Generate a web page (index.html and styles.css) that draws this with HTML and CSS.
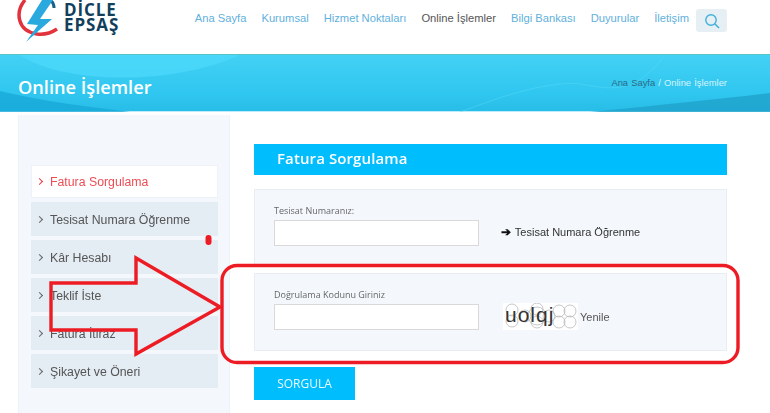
FILE: index.html
```html
<!DOCTYPE html>
<html lang="tr">
<head>
<meta charset="utf-8">
<title>Online İşlemler</title>
<link rel="stylesheet" href="styles.css">
</head>
<body>
<div class="page">
  <header class="header">
    <a class="logo">
      <svg class="logo-mark" width="60" height="44" viewBox="0 0 60 44">
        <path d="M25 0C15 12 17 31 37 34C45 35 51 33 57 29" fill="none" stroke="#e2333d" stroke-width="3.500"/>
        <path d="M50 0C53 2 54 5 54 8" fill="none" stroke="#1a5f86" stroke-width="3"/>
        <polygon points="42,0 53,0 40,19 52,19 26,42 38,25 27,24" fill="#2aa9df"/>
      </svg>
      <span class="logo-text">DİCLE<br>EPSAŞ</span>
    </a>
    <nav class="nav">
      <a>Ana Sayfa</a><a>Kurumsal</a><a>Hizmet Noktaları</a><a class="current">Online İşlemler</a><a>Bilgi Bankası</a><a>Duyurular</a><a>İletişim</a>
      <span class="search">
        <svg width="16" height="16" viewBox="0 0 16 16"><circle cx="7" cy="7" r="5.200" fill="none" stroke="#3fb0dc" stroke-width="1.400"/><path d="M11 11l4 4" stroke="#3fb0dc" stroke-width="1.600"/></svg>
      </span>
    </nav>
  </header>
  <section class="banner">
    <svg class="banner-art" width="770" height="57" viewBox="0 0 770 57" preserveAspectRatio="none">
      <path d="M20 0C60 28 170 32 240 0Z" fill="#4cd8fb" opacity=".75"/>
      <path d="M0 36C40 46 90 52 130 57H0Z" fill="#15a5d6" opacity=".7"/>
      <path d="M590 57C660 50 720 44 770 38V57Z" fill="#1fa3cc" opacity=".8"/>
      <path d="M460 57C500 42 530 32 560 29C590 26 600 38 630 30C640 26 650 18 663 3" fill="none" stroke="#5adcf8" stroke-width="1" opacity=".45"/>
    </svg>
    <h1 class="banner-title">Online İşlemler</h1>
    <div class="crumbs"><span class="crumb-home">Ana Sayfa</span> / Online İşlemler</div>
  </section>
  <main class="main">
    <aside class="sidebar">
      <ul class="menu">
        <li class="active"><i></i>Fatura Sorgulama</li>
        <li><i></i>Tesisat Numara Öğrenme</li>
        <li><i></i>Kâr Hesabı</li>
        <li><i></i>Teklif İste</li>
        <li><i></i>Fatura İtiraz</li>
        <li><i></i>Şikayet ve Öneri</li>
      </ul>
    </aside>
    <div class="content">
      <h2 class="title">Fatura Sorgulama</h2>
      <div class="box box-first">
        <div class="field">
          <label>Tesisat Numaranız:</label>
          <div class="input"></div>
        </div>
        <a class="learn"><b>➔</b> Tesisat Numara Öğrenme</a>
      </div>
      <div class="box box-second">
        <div class="field">
          <label>Doğrulama Kodunu Giriniz</label>
          <div class="input"></div>
        </div>
        <div class="captcha">
          <svg width="75" height="27" viewBox="0 0 75 27">
            <rect width="75" height="27" fill="#fff"/>
            <g fill="none" stroke="#b9b9b9" stroke-width=".8">
              <circle cx="9" cy="7" r="6"/><circle cx="9" cy="18" r="6"/><circle cx="22" cy="13" r="6"/><circle cx="34" cy="6" r="6"/><circle cx="34" cy="13" r="9"/><circle cx="34" cy="19" r="6"/><circle cx="46" cy="13" r="6"/><circle cx="56" cy="8" r="6"/><circle cx="56" cy="19" r="6"/><circle cx="67" cy="8" r="6"/><circle cx="67" cy="19" r="6"/>
            </g>
            <text x="2" y="19" class="captcha-text">uolqj</text>
          </svg>
          <span class="renew">Yenile</span>
        </div>
      </div>
      <button class="submit" type="button">SORGULA</button>
    </div>
  </main>
  <svg class="annotation" width="770" height="413" viewBox="0 0 770 413">
    <rect x="222" y="265.500" width="516" height="97" rx="15" fill="none" stroke="#ed1c24" stroke-width="3.400"/>
    <polygon points="51,283 136,283 136,258 220,307 136,354 136,330 51,330" fill="none" stroke="#ed1c24" stroke-width="3.400"/>
    <rect x="205.500" y="235" width="6" height="10" rx="3" fill="#ed1c24"/>
  </svg>
</div>
</body>
</html>
```
FILE: styles.css
```css
* { box-sizing: border-box; }
html, body { margin: 0; padding: 0; background: #fff; }
.page {
  position: relative;
  width: 770px;
  height: 413px;
  overflow: hidden;
  font-family: "Liberation Sans", Arial, sans-serif;
  filter: blur(.45px);
}
.header {
  height: 54px;
  display: flex;
  justify-content: space-between;
  align-items: flex-start;
  padding-right: 43px;
  background: #fff;
}
.logo { display: flex; }
.logo-mark { flex: none; }
.logo-text {
  margin: 2px 0 0 4px;
  font-family: "Open Sans", sans-serif;
  font-weight: 700;
  font-size: 17px;
  line-height: 15px;
  letter-spacing: .9px;
  color: #123f5c;
}
.nav { display: flex; align-items: flex-start; padding-top: 9px; }
.nav a {
  margin-right: 15px;
  font-size: 11.200px;
  line-height: 18px;
  color: #5fb0dd;
  white-space: nowrap;
}
.nav a:nth-child(7) { margin-right: 7px; }
.nav a.current { color: #555; }
.search {
  width: 31px;
  height: 23px;
  display: flex;
  align-items: center;
  justify-content: center;
  background: #e6eff3;
  border-radius: 3px;
}
.banner {
  position: relative;
  height: 58px;
  display: flex;
  justify-content: space-between;
  align-items: center;
  padding: 0 43px 2px 18px;
  background: linear-gradient(#43d1f5, #2fc6ef 70%, #28bde8);
  border-top: 1px solid #57c3c4;
  border-bottom: 1px solid #bcecf9;
}
.banner-art { position: absolute; left: 0; top: 0; }
.banner-title {
  position: relative;
  margin: 0;
  font-family: "Open Sans", sans-serif;
  font-size: 18.200px;
  font-weight: 600;
  color: #fff;
  padding-top: 10px;
}
.crumbs {
  position: relative;
  align-self: center;
  font-size: 9.400px;
  word-spacing: .5px;
  color: #d6f3fc;
}
.crumb-home { color: #2a6c86; }
.main { display: flex; padding-left: 18px; }
.sidebar {
  flex: none;
  width: 212px;
  height: 310px;
  margin-top: 3px;
  padding: 50px 11px 0 12px;
  background: #f4f8fd;
  border-left: 1px solid #edf3fa;
  border-right: 1px solid #edf3fa;
}
.menu { list-style: none; margin: 0; padding: 0; display: flex; flex-direction: column; gap: 4px; }
.menu li {
  height: 34px;
  display: flex;
  align-items: center;
  padding: 1px 0 0 6px;
  background: #e4ecf4;
  font-size: 12.300px;
  color: #555;
  white-space: nowrap;
}
.menu li i {
  width: 5px;
  height: 5px;
  margin-right: 8px;
  border-top: 1px solid #666;
  border-right: 1px solid #666;
  transform: rotate(45deg);
}
.menu li.active {
  height: 33px;
  padding: 0 0 0 5px;
  background: #fff;
  border: 1px solid #eef2f8;
  color: #ec4d55;
}
.menu li.active i { border-color: #ec3b45; }
.content { flex: none; width: 473px; margin-left: 24px; padding-top: 32px; }
.title {
  height: 31px;
  margin: 0 0 14px;
  padding-left: 23px;
  background: #00bdfe;
  color: #fff;
  font-family: "Open Sans", sans-serif;
  font-size: 15px;
  font-weight: 600;
  line-height: 28px;
  letter-spacing: .1px;
}
.box {
  display: flex;
  background: #f4f8fd;
  border: 1px solid #e9edf1;
  padding-left: 19px;
}
.box-first { height: 76px; padding-top: 14px; margin-bottom: 8px; align-items: flex-start; }
.box-second { height: 78px; padding-top: 14px; margin-bottom: 16px; align-items: flex-start; }
.field { width: 205px; flex: none; }
.field label {
  display: block;
  height: 16px;
  font-family: "Open Sans", sans-serif;
  font-size: 9px;
  line-height: 14px;
  color: #666;
}
.input { height: 26px; background: #fff; border: 1px solid #d9d9d9; }
.learn {
  margin: 21px 0 0 22px;
  font-size: 11px;
  line-height: 14px;
  color: #333;
  white-space: nowrap;
}
.learn b { font-size: 12px; color: #111; margin-right: 1px; }
.captcha { display: flex; align-items: center; margin: 15px 0 0 24px; }
.captcha svg { display: block; }
.captcha-text { font-family: "Liberation Sans", sans-serif; font-size: 21px; fill: #333; letter-spacing: 1px; }
.renew { margin-left: 2px; font-size: 11px; color: #555; }
.submit {
  display: block;
  width: 101px;
  height: 33px;
  padding: 0;
  border: 0;
  background: #00bdfe;
  color: #eafaff;
  font-family: "Open Sans", sans-serif;
  font-size: 12px;
}
.annotation { position: absolute; left: 0; top: 0; }
```
